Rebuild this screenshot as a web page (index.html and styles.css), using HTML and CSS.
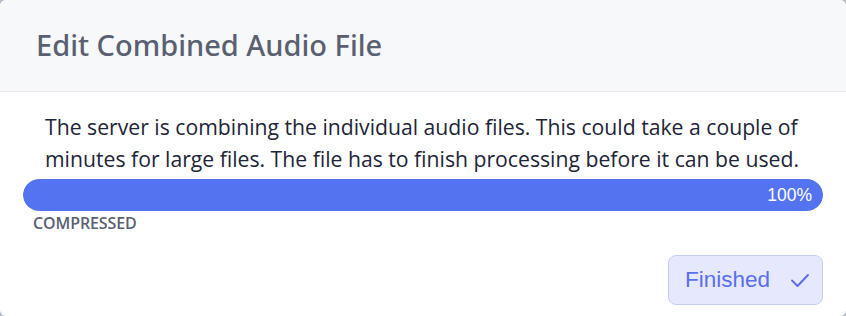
FILE: index.html
```html
<!DOCTYPE html>
<html>
<head>
<meta charset="utf-8">
<link rel="stylesheet" href="styles.css">
</head>
<body>
<div class="dialog">
  <div class="header">
    <h1 class="title">Edit Combined Audio File</h1>
  </div>
  <div class="body">
    <p class="message">The server is combining the individual audio files. This could take a couple of minutes for large files. The file has to finish processing before it can be used.</p>
    <div class="progress">
      <div class="progress-fill" style="width:100%"><span class="pct">100%</span></div>
    </div>
    <div class="status">COMPRESSED</div>
    <div class="actions">
      <button class="btn">Finished
        <svg class="check" viewBox="0 0 24 24" width="24" height="24"><path d="M4 12.5l5.5 5.5L20 7" fill="none" stroke="currentColor" stroke-width="2" stroke-linecap="round" stroke-linejoin="round"/></svg>
      </button>
    </div>
  </div>
</div>
</body>
</html>
```
FILE: styles.css
```css
html, body { margin: 0; padding: 0; }
body { background: #b8bcc6; width: 846px; height: 316px; overflow: hidden; }
.dialog {
  width: 846px; height: 316px; background: #ffffff; border-radius: 6px; overflow: hidden;
  font-family: "Open Sans", "Noto Sans", sans-serif;
  display: flex; flex-direction: column;
}
.header {
  background: #f7f8fa; border-bottom: 1px solid #e5e7eb;
  height: 92px; box-sizing: border-box; display: flex; align-items: center;
  padding-left: 36px;
}
.title { margin: 0; font-family: "Noto Sans", "Open Sans", sans-serif; font-size: 29px; font-weight: 500; color: #5a6072; padding-bottom: 2px; }
.body { padding: 0 23px 0 23px; display: flex; flex-direction: column; }
.message { margin: 19px 0 0 22px; font-size: 21.2px; line-height: 31.5px; color: #1e2538; }
.progress { margin-top: 5px; height: 32px; background: #e5e7eb; border-radius: 16px; overflow: hidden; }
.progress-fill { height: 100%; background: #5373f0; border-radius: 16px; display: flex; align-items: center; justify-content: flex-end; }
.pct { font-family: "Liberation Sans", Arial, sans-serif; color: #fff; font-size: 17.5px; padding-right: 11px; }
.status { margin: 1px 0 0 10px; font-size: 16px; font-weight: 600; color: #5a6072; letter-spacing: -0.1px; }
.actions { display: flex; justify-content: flex-end; margin-top: 21px; }
.btn {
  display: flex; align-items: center; gap: 18px;
  height: 50px; padding: 0 10px 0 16px; box-sizing: border-box;
  background: #e6e9fd; border: 1px solid #c6cff8; border-radius: 8px;
  font-family: "Liberation Sans", Arial, sans-serif; font-size: 22.5px; color: #5b6ef0;
}
.check { color: #5b6ef0; }
```
